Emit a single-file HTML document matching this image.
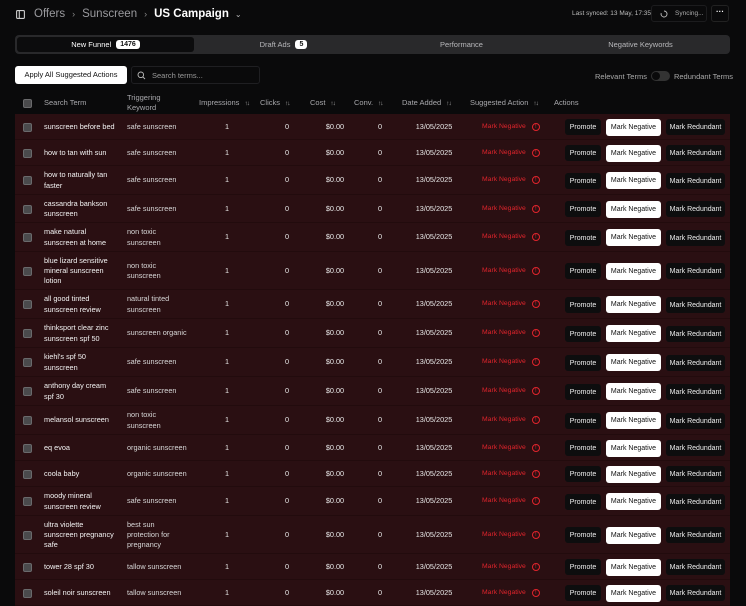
<!DOCTYPE html>
<html><head><meta charset="utf-8">
<style>
*{box-sizing:border-box;margin:0;padding:0}
body{width:746px;height:600px;overflow:hidden;background:#0a0a0b;font-family:"Liberation Sans",sans-serif;color:#e8e8e8;position:relative}
.abs{position:absolute}
.crumb{top:6px;left:16px;font-size:11.5px;color:#9a9a9e;display:flex;align-items:center;height:16px}
.crumb b{color:#fff;font-weight:700;font-size:11.5px}
.sep{margin:0 7px;font-size:9px;color:#888}
.tabs{top:35px;left:15px;width:715px;height:19px;background:#29292b;border-radius:4px}
.tab{position:absolute;top:0;height:19px;display:flex;align-items:center;justify-content:center;font-size:7.5px;color:#b8b8bb}
.badge{background:#fff;color:#111;border-radius:3px;font-size:7px;padding:1px 4px;margin-left:5px;font-weight:700}
.btn{border-radius:3px;display:block;text-align:center;font-size:7px;line-height:17px;white-space:nowrap}
.row{position:absolute;left:15px;width:715px;background:#2a0f12;border-bottom:1px solid #220b0d;display:flex;align-items:center;font-size:7.3px;line-height:10.2px;padding-top:1px}
.row>div{flex:none}
.cb{width:23px;padding-left:8px}
.cb i{display:block;width:9px;height:9px;background:#4a4a4c;border:1px solid #6a6a6c;border-radius:2px}
.t{width:83px;padding-left:6px;color:#f4f4f4;white-space:nowrap}
.k{width:77px;padding-left:6px;color:#d8d8d8;white-space:nowrap}
.c{text-align:center}
.i1{width:58px}.i2{width:62px}.i3{width:34px}.i4{width:56px}.i5{width:52px}
.s{width:105px;padding-left:22px;color:#e0242c;font-size:6.8px;display:flex;align-items:center;white-space:nowrap}
.s span{display:inline-block;width:8px;height:8px;border:1px solid #e0242c;border-radius:50%;margin-left:6px;font-size:6px;line-height:6px;text-align:center}
.a{display:flex;gap:5px;align-items:center}
.p{width:36px;height:16px;background:#0d0d0e;color:#eee}
.n{width:55px;height:17px;line-height:18px;background:#fff;color:#111}
.r{width:59px;height:16px;background:#0d0d0e;color:#eee}
.hd{position:absolute;top:92px;left:15px;width:715px;height:22px;display:flex;align-items:center;font-size:7.5px;color:#a8a8ac;line-height:10px}
.hd>div{flex:none;white-space:nowrap}
.ar{font-size:6.5px;margin-left:5px;letter-spacing:-1px;color:#aaa}
</style></head><body>

<div class="abs crumb">
<svg width="9" height="9" viewBox="0 0 9 9" style="margin-right:9px"><rect x="0.6" y="0.6" width="7.8" height="7.8" rx="1" fill="none" stroke="#ccc" stroke-width="1.1"/><line x1="3.3" y1="0.6" x2="3.3" y2="8.4" stroke="#ccc" stroke-width="1.1"/></svg>
Offers<span class="sep">›</span>Sunscreen<span class="sep">›</span><b>US Campaign</b><span style="margin-left:6px;font-size:8px;color:#bbb">⌄</span>
</div>
<div class="abs" style="top:10px;left:572px;font-size:6.5px;color:#bbb">Last synced: 13 May, 17:35</div>
<div class="abs" style="top:5px;left:651px;width:56px;height:17px;border:1px solid #1c1c1e;border-radius:3px;display:flex;align-items:center;font-size:6.5px;color:#aaa">
<svg width="8" height="8" viewBox="0 0 8 8" style="margin:0 7px 0 8px"><path d="M4 1 A3 3 0 1 1 1.2 3" fill="none" stroke="#bbb" stroke-width="0.9"/></svg>Syncing...</div>
<div class="abs" style="top:5px;left:711px;width:18px;height:17px;border:1px solid #222;border-radius:3px;color:#fff;font-size:8px;text-align:center;line-height:12px;font-weight:700">···</div>

<div class="abs tabs">
<div class="tab" style="left:2px;top:2px;height:15px;width:177px;background:#0c0c0d;border-radius:3px;color:#fff">New Funnel<span class="badge">1476</span></div>
<div class="tab" style="left:180px;width:177px">Draft Ads<span class="badge">5</span></div>
<div class="tab" style="left:357px;width:179px">Performance</div>
<div class="tab" style="left:536px;width:179px">Negative Keywords</div>
</div>

<div class="abs" style="top:66px;left:15px;width:112px;height:18px;background:#fff;color:#111;font-size:7.5px;border-radius:3px;text-align:center;line-height:18px">Apply All Suggested Actions</div>
<div class="abs" style="top:66px;left:131px;width:129px;height:18px;border:1px solid #1f1f22;border-radius:3px;display:flex;align-items:center;font-size:7.5px;color:#999">
<svg width="9" height="9" viewBox="0 0 9 9" style="margin:0 6px 0 5px"><circle cx="3.8" cy="3.8" r="2.8" fill="none" stroke="#bbb" stroke-width="0.9"/><line x1="5.9" y1="5.9" x2="8" y2="8" stroke="#bbb" stroke-width="0.9"/></svg>Search terms...</div>
<div class="abs" style="top:71px;left:595px;font-size:7.5px;color:#aaa;display:flex;align-items:center">Relevant Terms<span style="display:inline-block;width:19px;height:10px;border-radius:5px;background:#333;margin:0 4px;position:relative"><span style="position:absolute;left:1px;top:1px;width:8px;height:8px;border-radius:50%;background:#0a0a0b"></span></span>Redundant Terms</div>

<div class="hd">
<div class="cb"><i></i></div>
<div style="width:83px;padding-left:6px">Search Term</div>
<div style="width:77px;padding-left:6px">Triggering<br>Keyword</div>
<div style="width:62px;padding-left:1px">Impressions<span class="ar">↑↓</span></div>
<div style="width:50px">Clicks<span class="ar">↑↓</span></div>
<div style="width:44px">Cost<span class="ar">↑↓</span></div>
<div style="width:48px">Conv.<span class="ar">↑↓</span></div>
<div style="width:68px">Date Added<span class="ar">↑↓</span></div>
<div style="width:84px">Suggested Action<span class="ar">↑↓</span></div>
<div>Actions</div>
</div>

<div class="row" style="top:114px;height:26px"><div class="cb"><i></i></div><div class="t">sunscreen before bed</div><div class="k">safe sunscreen</div><div class="c i1">1</div><div class="c i2">0</div><div class="c i3">$0.00</div><div class="c i4">0</div><div class="c i5">13/05/2025</div><div class="s">Mark Negative<span>!</span></div><div class="a"><div class="btn p">Promote</div><div class="btn n">Mark Negative</div><div class="btn r">Mark Redundant</div></div></div>
<div class="row" style="top:140px;height:26px"><div class="cb"><i></i></div><div class="t">how to tan with sun</div><div class="k">safe sunscreen</div><div class="c i1">1</div><div class="c i2">0</div><div class="c i3">$0.00</div><div class="c i4">0</div><div class="c i5">13/05/2025</div><div class="s">Mark Negative<span>!</span></div><div class="a"><div class="btn p">Promote</div><div class="btn n">Mark Negative</div><div class="btn r">Mark Redundant</div></div></div>
<div class="row" style="top:166px;height:29px"><div class="cb"><i></i></div><div class="t">how to naturally tan<br>faster</div><div class="k">safe sunscreen</div><div class="c i1">1</div><div class="c i2">0</div><div class="c i3">$0.00</div><div class="c i4">0</div><div class="c i5">13/05/2025</div><div class="s">Mark Negative<span>!</span></div><div class="a"><div class="btn p">Promote</div><div class="btn n">Mark Negative</div><div class="btn r">Mark Redundant</div></div></div>
<div class="row" style="top:195px;height:28px"><div class="cb"><i></i></div><div class="t">cassandra bankson<br>sunscreen</div><div class="k">safe sunscreen</div><div class="c i1">1</div><div class="c i2">0</div><div class="c i3">$0.00</div><div class="c i4">0</div><div class="c i5">13/05/2025</div><div class="s">Mark Negative<span>!</span></div><div class="a"><div class="btn p">Promote</div><div class="btn n">Mark Negative</div><div class="btn r">Mark Redundant</div></div></div>
<div class="row" style="top:223px;height:29px"><div class="cb"><i></i></div><div class="t">make natural<br>sunscreen at home</div><div class="k">non toxic<br>sunscreen</div><div class="c i1">1</div><div class="c i2">0</div><div class="c i3">$0.00</div><div class="c i4">0</div><div class="c i5">13/05/2025</div><div class="s">Mark Negative<span>!</span></div><div class="a"><div class="btn p">Promote</div><div class="btn n">Mark Negative</div><div class="btn r">Mark Redundant</div></div></div>
<div class="row" style="top:252px;height:38px"><div class="cb"><i></i></div><div class="t">blue lizard sensitive<br>mineral sunscreen<br>lotion</div><div class="k">non toxic<br>sunscreen</div><div class="c i1">1</div><div class="c i2">0</div><div class="c i3">$0.00</div><div class="c i4">0</div><div class="c i5">13/05/2025</div><div class="s">Mark Negative<span>!</span></div><div class="a"><div class="btn p">Promote</div><div class="btn n">Mark Negative</div><div class="btn r">Mark Redundant</div></div></div>
<div class="row" style="top:290px;height:29px"><div class="cb"><i></i></div><div class="t">all good tinted<br>sunscreen review</div><div class="k">natural tinted<br>sunscreen</div><div class="c i1">1</div><div class="c i2">0</div><div class="c i3">$0.00</div><div class="c i4">0</div><div class="c i5">13/05/2025</div><div class="s">Mark Negative<span>!</span></div><div class="a"><div class="btn p">Promote</div><div class="btn n">Mark Negative</div><div class="btn r">Mark Redundant</div></div></div>
<div class="row" style="top:319px;height:29px"><div class="cb"><i></i></div><div class="t">thinksport clear zinc<br>sunscreen spf 50</div><div class="k">sunscreen organic</div><div class="c i1">1</div><div class="c i2">0</div><div class="c i3">$0.00</div><div class="c i4">0</div><div class="c i5">13/05/2025</div><div class="s">Mark Negative<span>!</span></div><div class="a"><div class="btn p">Promote</div><div class="btn n">Mark Negative</div><div class="btn r">Mark Redundant</div></div></div>
<div class="row" style="top:348px;height:29px"><div class="cb"><i></i></div><div class="t">kiehl's spf 50<br>sunscreen</div><div class="k">safe sunscreen</div><div class="c i1">1</div><div class="c i2">0</div><div class="c i3">$0.00</div><div class="c i4">0</div><div class="c i5">13/05/2025</div><div class="s">Mark Negative<span>!</span></div><div class="a"><div class="btn p">Promote</div><div class="btn n">Mark Negative</div><div class="btn r">Mark Redundant</div></div></div>
<div class="row" style="top:377px;height:29px"><div class="cb"><i></i></div><div class="t">anthony day cream<br>spf 30</div><div class="k">safe sunscreen</div><div class="c i1">1</div><div class="c i2">0</div><div class="c i3">$0.00</div><div class="c i4">0</div><div class="c i5">13/05/2025</div><div class="s">Mark Negative<span>!</span></div><div class="a"><div class="btn p">Promote</div><div class="btn n">Mark Negative</div><div class="btn r">Mark Redundant</div></div></div>
<div class="row" style="top:406px;height:29px"><div class="cb"><i></i></div><div class="t">melansol sunscreen</div><div class="k">non toxic<br>sunscreen</div><div class="c i1">1</div><div class="c i2">0</div><div class="c i3">$0.00</div><div class="c i4">0</div><div class="c i5">13/05/2025</div><div class="s">Mark Negative<span>!</span></div><div class="a"><div class="btn p">Promote</div><div class="btn n">Mark Negative</div><div class="btn r">Mark Redundant</div></div></div>
<div class="row" style="top:435px;height:26px"><div class="cb"><i></i></div><div class="t">eq evoa</div><div class="k">organic sunscreen</div><div class="c i1">1</div><div class="c i2">0</div><div class="c i3">$0.00</div><div class="c i4">0</div><div class="c i5">13/05/2025</div><div class="s">Mark Negative<span>!</span></div><div class="a"><div class="btn p">Promote</div><div class="btn n">Mark Negative</div><div class="btn r">Mark Redundant</div></div></div>
<div class="row" style="top:461px;height:26px"><div class="cb"><i></i></div><div class="t">coola baby</div><div class="k">organic sunscreen</div><div class="c i1">1</div><div class="c i2">0</div><div class="c i3">$0.00</div><div class="c i4">0</div><div class="c i5">13/05/2025</div><div class="s">Mark Negative<span>!</span></div><div class="a"><div class="btn p">Promote</div><div class="btn n">Mark Negative</div><div class="btn r">Mark Redundant</div></div></div>
<div class="row" style="top:487px;height:29px"><div class="cb"><i></i></div><div class="t">moody mineral<br>sunscreen review</div><div class="k">safe sunscreen</div><div class="c i1">1</div><div class="c i2">0</div><div class="c i3">$0.00</div><div class="c i4">0</div><div class="c i5">13/05/2025</div><div class="s">Mark Negative<span>!</span></div><div class="a"><div class="btn p">Promote</div><div class="btn n">Mark Negative</div><div class="btn r">Mark Redundant</div></div></div>
<div class="row" style="top:516px;height:38px"><div class="cb"><i></i></div><div class="t">ultra violette<br>sunscreen pregnancy<br>safe</div><div class="k">best sun<br>protection for<br>pregnancy</div><div class="c i1">1</div><div class="c i2">0</div><div class="c i3">$0.00</div><div class="c i4">0</div><div class="c i5">13/05/2025</div><div class="s">Mark Negative<span>!</span></div><div class="a"><div class="btn p">Promote</div><div class="btn n">Mark Negative</div><div class="btn r">Mark Redundant</div></div></div>
<div class="row" style="top:554px;height:26px"><div class="cb"><i></i></div><div class="t">tower 28 spf 30</div><div class="k">tallow sunscreen</div><div class="c i1">1</div><div class="c i2">0</div><div class="c i3">$0.00</div><div class="c i4">0</div><div class="c i5">13/05/2025</div><div class="s">Mark Negative<span>!</span></div><div class="a"><div class="btn p">Promote</div><div class="btn n">Mark Negative</div><div class="btn r">Mark Redundant</div></div></div>
<div class="row" style="top:580px;height:26px"><div class="cb"><i></i></div><div class="t">soleil noir sunscreen</div><div class="k">tallow sunscreen</div><div class="c i1">1</div><div class="c i2">0</div><div class="c i3">$0.00</div><div class="c i4">0</div><div class="c i5">13/05/2025</div><div class="s">Mark Negative<span>!</span></div><div class="a"><div class="btn p">Promote</div><div class="btn n">Mark Negative</div><div class="btn r">Mark Redundant</div></div></div>

</body></html>
